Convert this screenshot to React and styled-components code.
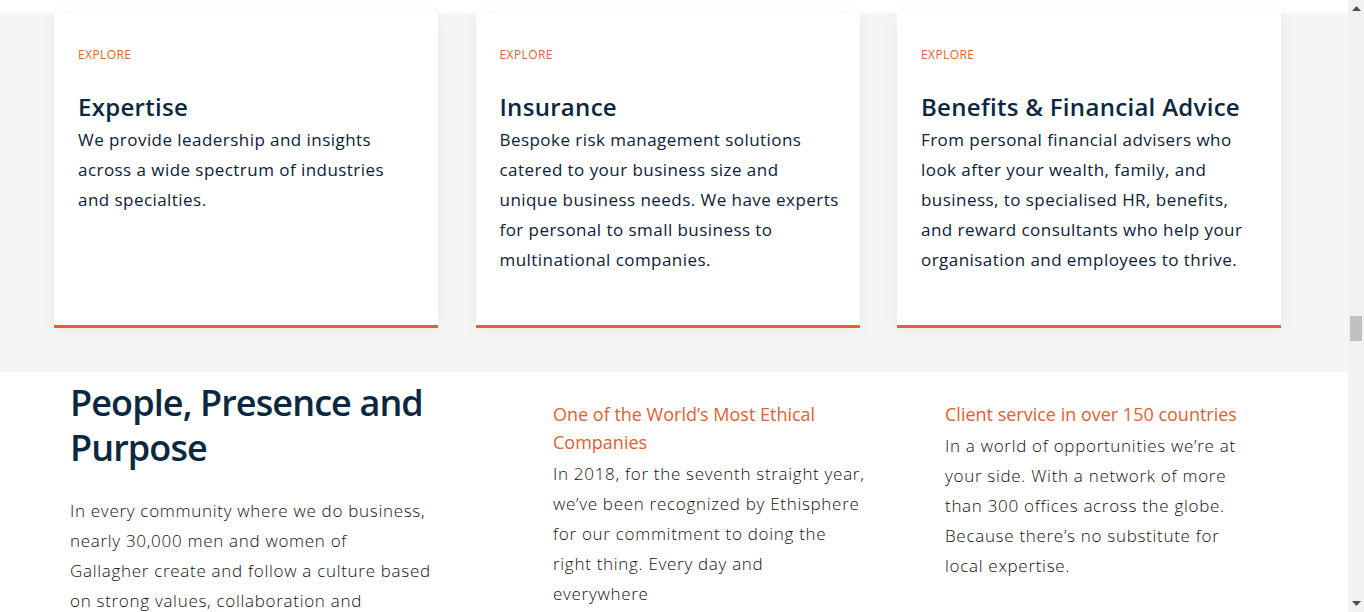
import React from "react";
import styled, { createGlobalStyle } from "styled-components";

const GlobalStyle = createGlobalStyle`
  html, body {
    margin: 0;
    padding: 0;
    height: 612px;
    overflow: hidden;
    background: #ffffff;
  }
  * {
    box-sizing: border-box;
  }
  body {
    font-family: "Open Sans", "Noto Sans", sans-serif;
    -webkit-font-smoothing: antialiased;
  }
`;

// line breaks follow the design, so copy keeps the same shape as the mockup
const cards = [
  {
    title: "Expertise",
    lines: [
      "We provide leadership and insights",
      "across a wide spectrum of industries",
      "and specialties.",
    ],
  },
  {
    title: "Insurance",
    lines: [
      "Bespoke risk management solutions",
      "catered to your business size and",
      "unique business needs. We have experts",
      "for personal to small business to",
      "multinational companies.",
    ],
  },
  {
    title: "Benefits & Financial Advice",
    lines: [
      "From personal financial advisers who",
      "look after your wealth, family, and",
      "business, to specialised HR, benefits,",
      "and reward consultants who help your",
      "organisation and employees to thrive.",
    ],
  },
];

const facts = [
  {
    heading: ["One of the World’s Most Ethical", "Companies"],
    lines: [
      "In 2018, for the seventh straight year,",
      "we’ve been recognized by Ethisphere",
      "for our commitment to doing the",
      "right thing. Every day and",
      "everywhere",
    ],
  },
  {
    heading: ["Client service in over 150 countries"],
    lines: [
      "In a world of opportunities we’re at",
      "your side. With a network of more",
      "than 300 offices across the globe.",
      "Because there’s no substitute for",
      "local expertise.",
    ],
  },
];

const intro = [
  "In every community where we do business,",
  "nearly 30,000 men and women of",
  "Gallagher create and follow a culture based",
  "on strong values, collaboration and",
];

const Lines = ({ items }) =>
  items.map((l) => <Line key={l}>{l}</Line>);

const App = () => {
  return (
    <>
      <GlobalStyle />
      <Window>
        <Page>
          <TopStrip />
          <CardSection>
            {cards.map((c) => (
              <Card key={c.title}>
                <Explore>Explore</Explore>
                <CardTitle>{c.title}</CardTitle>
                <CardText>
                  <Lines items={c.lines} />
                </CardText>
              </Card>
            ))}
          </CardSection>

          <InfoSection>
            <IntroColumn>
              <BigHeading>
                <Line>People, Presence and</Line>
                <Line>Purpose</Line>
              </BigHeading>
              <Body>
                <Lines items={intro} />
              </Body>
            </IntroColumn>
            {facts.map((f) => (
              <InfoColumn key={f.heading[0]}>
                <InfoHeading>
                  <Lines items={f.heading} />
                </InfoHeading>
                <Body>
                  <Lines items={f.lines} />
                </Body>
              </InfoColumn>
            ))}
          </InfoSection>
        </Page>

        <Scrollbar>
          <Arrow>
            <svg width="9" height="5" viewBox="0 0 9 5">
              <path d="M0 5 L4.5 0 L9 5 Z" fill="#505050" />
            </svg>
          </Arrow>
          <Track>
            <Thumb />
          </Track>
          <Arrow>
            <svg width="9" height="5" viewBox="0 0 9 5">
              <path d="M0 0 L4.5 5 L9 0 Z" fill="#505050" />
            </svg>
          </Arrow>
        </Scrollbar>
      </Window>
    </>
  );
};

const Window = styled.div`
  display: flex;
  width: 1364px;
  height: 612px;
  overflow: hidden;
`;

const Page = styled.main`
  flex: 1;
  display: flex;
  flex-direction: column;
  overflow: hidden;
  & > * {
    flex-shrink: 0;
  }
`;

const Line = styled.span`
  display: block;
  white-space: nowrap;
`;

const TopStrip = styled.div`
  height: 13px;
  background: #ffffff;
`;

const CardSection = styled.section`
  background: #f5f5f5;
  display: grid;
  grid-template-columns: repeat(3, 384px);
  column-gap: 37.5px;
  padding: 0 0 44px 54px;
`;

const Card = styled.article`
  background: #ffffff;
  height: 315px;
  padding: 34px 24px 0;
  border-bottom: 3px solid #e2612f;
  box-shadow: 0 2px 14px rgba(0, 0, 0, 0.06);
`;

const Explore = styled.div`
  font-size: 12px;
  line-height: 16px;
  letter-spacing: 0.4px;
  text-transform: uppercase;
  color: #e2612f;
`;

const CardTitle = styled.h3`
  margin: 29px 0 3px;
  font-size: 24px;
  line-height: 30px;
  font-weight: 600;
  letter-spacing: 0.3px;
  color: #0b2840;
`;

const CardText = styled.p`
  margin: 0;
  font-size: 17px;
  line-height: 30px;
  font-weight: 400;
  letter-spacing: 0.45px;
  color: #0b2238;
`;

const InfoSection = styled.section`
  display: grid;
  grid-template-columns: 483px 392px 1fr;
  padding: 0 0 0 70px;
  background: #ffffff;
`;

const IntroColumn = styled.div`
  padding-top: 8px;
`;

const BigHeading = styled.h2`
  margin: 0 0 26px;
  font-size: 36px;
  line-height: 45px;
  font-weight: 600;
  letter-spacing: -0.9px;
  color: #0b2840;
`;

const InfoColumn = styled.div`
  padding-top: 28px;
`;

const InfoHeading = styled.h4`
  margin: 0 0 3px;
  font-size: 18px;
  line-height: 28px;
  font-weight: 500;
  color: #e2612f;
`;

const Body = styled.p`
  margin: 0;
  font-size: 17px;
  line-height: 30px;
  font-weight: 300;
  color: #111111;
  letter-spacing: 0.7px;
`;

const Scrollbar = styled.div`
  width: 16px;
  flex-shrink: 0;
  display: flex;
  flex-direction: column;
  background: #f1f1f1;
`;

const Arrow = styled.div`
  height: 17px;
  display: flex;
  align-items: center;
  justify-content: center;
`;

const Track = styled.div`
  flex: 1;
  padding: 299px 2px 0;
`;

const Thumb = styled.div`
  height: 25px;
  background: #c1c1c1;
`;

export default App;
